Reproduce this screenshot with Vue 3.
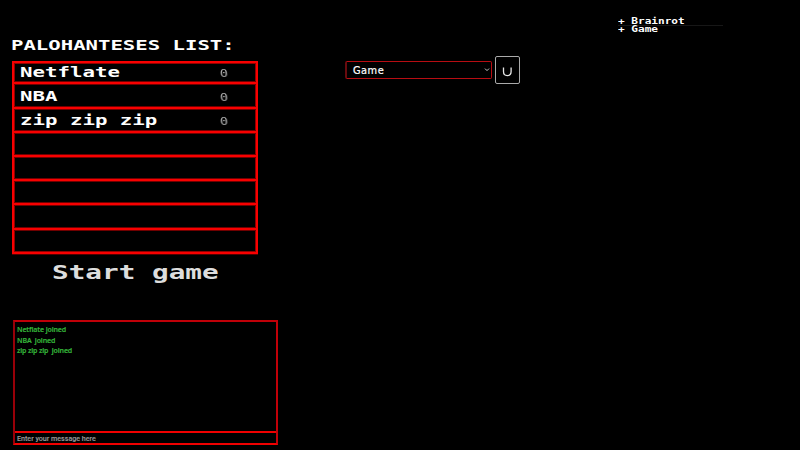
<script setup>
import { ref } from 'vue'

const players = ref([
  { name: 'Netflate', score: 0 },
  { name: 'NBA', score: 0 },
  { name: 'zip zip zip', score: 0 },
  null, null, null, null, null,
])
const log = ref(['Netflate joined', 'NBA\u00a0 joined', 'zip zip zip\u00a0 joined'])
const tags = ref(['+ Brainrot', '+ Game'])
</script>

<template>
  <main class="page">
    <section class="left">
      <h1 class="title"><span>PALOHANTESES LIST:</span></h1>
      <ul class="players">
        <li v-for="(p, i) in players" :key="i" class="row">
          <template v-if="p">
            <span class="name">{{ p.name }}</span>
            <span class="score">{{ p.score }}</span>
          </template>
        </li>
      </ul>
      <button class="start"><span>Start game</span></button>
      <div class="chat">
        <div class="log">
          <p v-for="line in log" :key="line">{{ line }}</p>
        </div>
        <div class="entry">Enter your message here</div>
      </div>
    </section>
    <section class="controls">
      <div class="select">
        <span class="value">Game</span>
        <svg width="6" height="4" viewBox="0 0 6 4"><path d="M1 .6 3 2.6 5 .6" fill="none" stroke="#ccc" stroke-width="1" /></svg>
      </div>
      <button class="key">
        <svg width="11" height="10" viewBox="0 0 11 10"><path d="M1.5 .5V4.6Q1.5 8.6 5.3 8.6T9.1 4.6V.5" fill="none" stroke="#e6e6e6" stroke-width="1.3" /></svg>
      </button>
    </section>
    <aside class="tags">
      <div v-for="t in tags" :key="t" class="tag"><span>{{ t }}</span></div>
    </aside>
  </main>
</template>

<style>
body {
  background: #000;
  overflow: hidden;
}
</style>

<style scoped>
.page {
  width: 800px;
  height: 450px;
  display: flex;
  background: #000;
  color: #fff;
  font-family: "DejaVu Sans Mono", monospace;
  overflow: hidden;
}
.left {
  width: 266px;
  margin-left: 12px;
  padding-top: 36px;
  flex: none;
}
.title {
  margin: 0;
  height: 25px;
  font-size: 14.8px;
  line-height: 17px;
  white-space: pre;
}
.title span,
.name,
.start span,
.tag span {
  display: inline-block;
  transform-origin: 0 50%;
  white-space: pre;
}
.title span {
  transform: scaleX(1.395);
  margin-left: -1px;
}
.players {
  list-style: none;
  margin: 0;
  padding: 0;
  width: 246px;
  height: 193px;
  box-sizing: border-box;
  border: 2px solid #f80000;
  box-shadow: inset 0 0 0 1px #900000, 0 1px 0 #500000;
}
.row {
  height: 24.2px;
  box-sizing: border-box;
  border-bottom: 2px solid #f80000;
  box-shadow: 0 1px 0 #700000, inset 0 -1px 0 #700000;
  display: flex;
  align-items: center;
  padding: 1px 28px 0 6px;
}
.row:first-child {
  height: 21.4px;
}
.row:last-child {
  border-bottom: 0;
  height: 22px;
  box-shadow: none;
}
.name {
  flex: 1;
  font-size: 14.5px;
  line-height: 18px;
  font-weight: bold;
  transform: scaleX(1.43);
}
.row:first-child .name {
  margin-top: -3px;
}
.score {
  font: 11px/12px "DejaVu Sans Mono", monospace;
  color: #b4b4b4;
  padding-top: 4px;
  width: 8px;
  text-align: center;
  transform: scaleX(1.2) skewX(4deg);
  will-change: transform;
}
.row:first-child .score {
  padding-top: 1px;
}
.start {
  display: block;
  margin: 5px 0 0 40px;
  padding: 0;
  border: 0;
  background: none;
  color: #ddd;
  height: 27px;
  font: bold 19.5px/25px "DejaVu Sans Mono", monospace;
}
.start span {
  transform: scaleX(1.42);
}
.chat {
  margin: 34px 0 0 1px;
  width: 265px;
  height: 125px;
  box-sizing: border-box;
  border: 2px solid #c00008;
  border-left-color: #980008;
  border-bottom-color: #f00000;
  display: flex;
  flex-direction: column;
}
.log {
  flex: 1;
  padding: 3px 2px;
  color: #35b53a;
  font: 600 7px/10.5px "Noto Sans", sans-serif;
  letter-spacing: -0.14px;
  -webkit-text-stroke: 0.15px #35b53a;
}
.log p {
  margin: 0;
}
.entry {
  height: 12px;
  box-sizing: border-box;
  border-top: 2px solid #f00000;
  padding: 1px 0 0 2px;
  color: #999;
  font: 500 7.2px/10px Roboto, sans-serif;
  letter-spacing: -0.04px;
  -webkit-text-stroke: 0.1px #999;
}
.controls {
  display: flex;
  align-items: flex-start;
  margin-left: 67px;
  padding-top: 56px;
  gap: 3px;
  width: 175px;
  flex: none;
}
.select {
  width: 147px;
  height: 18px;
  margin-top: 5px;
  box-sizing: border-box;
  border: 1px solid #b80d12;
  border-left: 2px solid #680b0e;
  border-radius: 2px;
  display: flex;
  align-items: center;
  justify-content: space-between;
  padding: 0 1px 0 6px;
}
.value {
  font: 9.8px/14px "DejaVu Sans", sans-serif;
  letter-spacing: 0.5px;
  -webkit-text-stroke: 0.2px #fff;
  padding-top: 1px;
}
.key {
  width: 25px;
  height: 28px;
  padding: 3px 0 0;
  border: 1px solid #aaa;
  border-radius: 2px;
  background: #000;
  display: flex;
  align-items: center;
  justify-content: center;
}
.tags {
  width: 105px;
  margin-left: 98px;
  padding-top: 17px;
}
.tag {
  height: 8px;
  font: bold 8px/9px "DejaVu Sans Mono", monospace;
}
.tag:first-child {
  border-bottom: 1px solid #171717;
}
.tag:last-child {
  line-height: 8px;
}
.tag span {
  transform: scaleX(1.385);
}
</style>
